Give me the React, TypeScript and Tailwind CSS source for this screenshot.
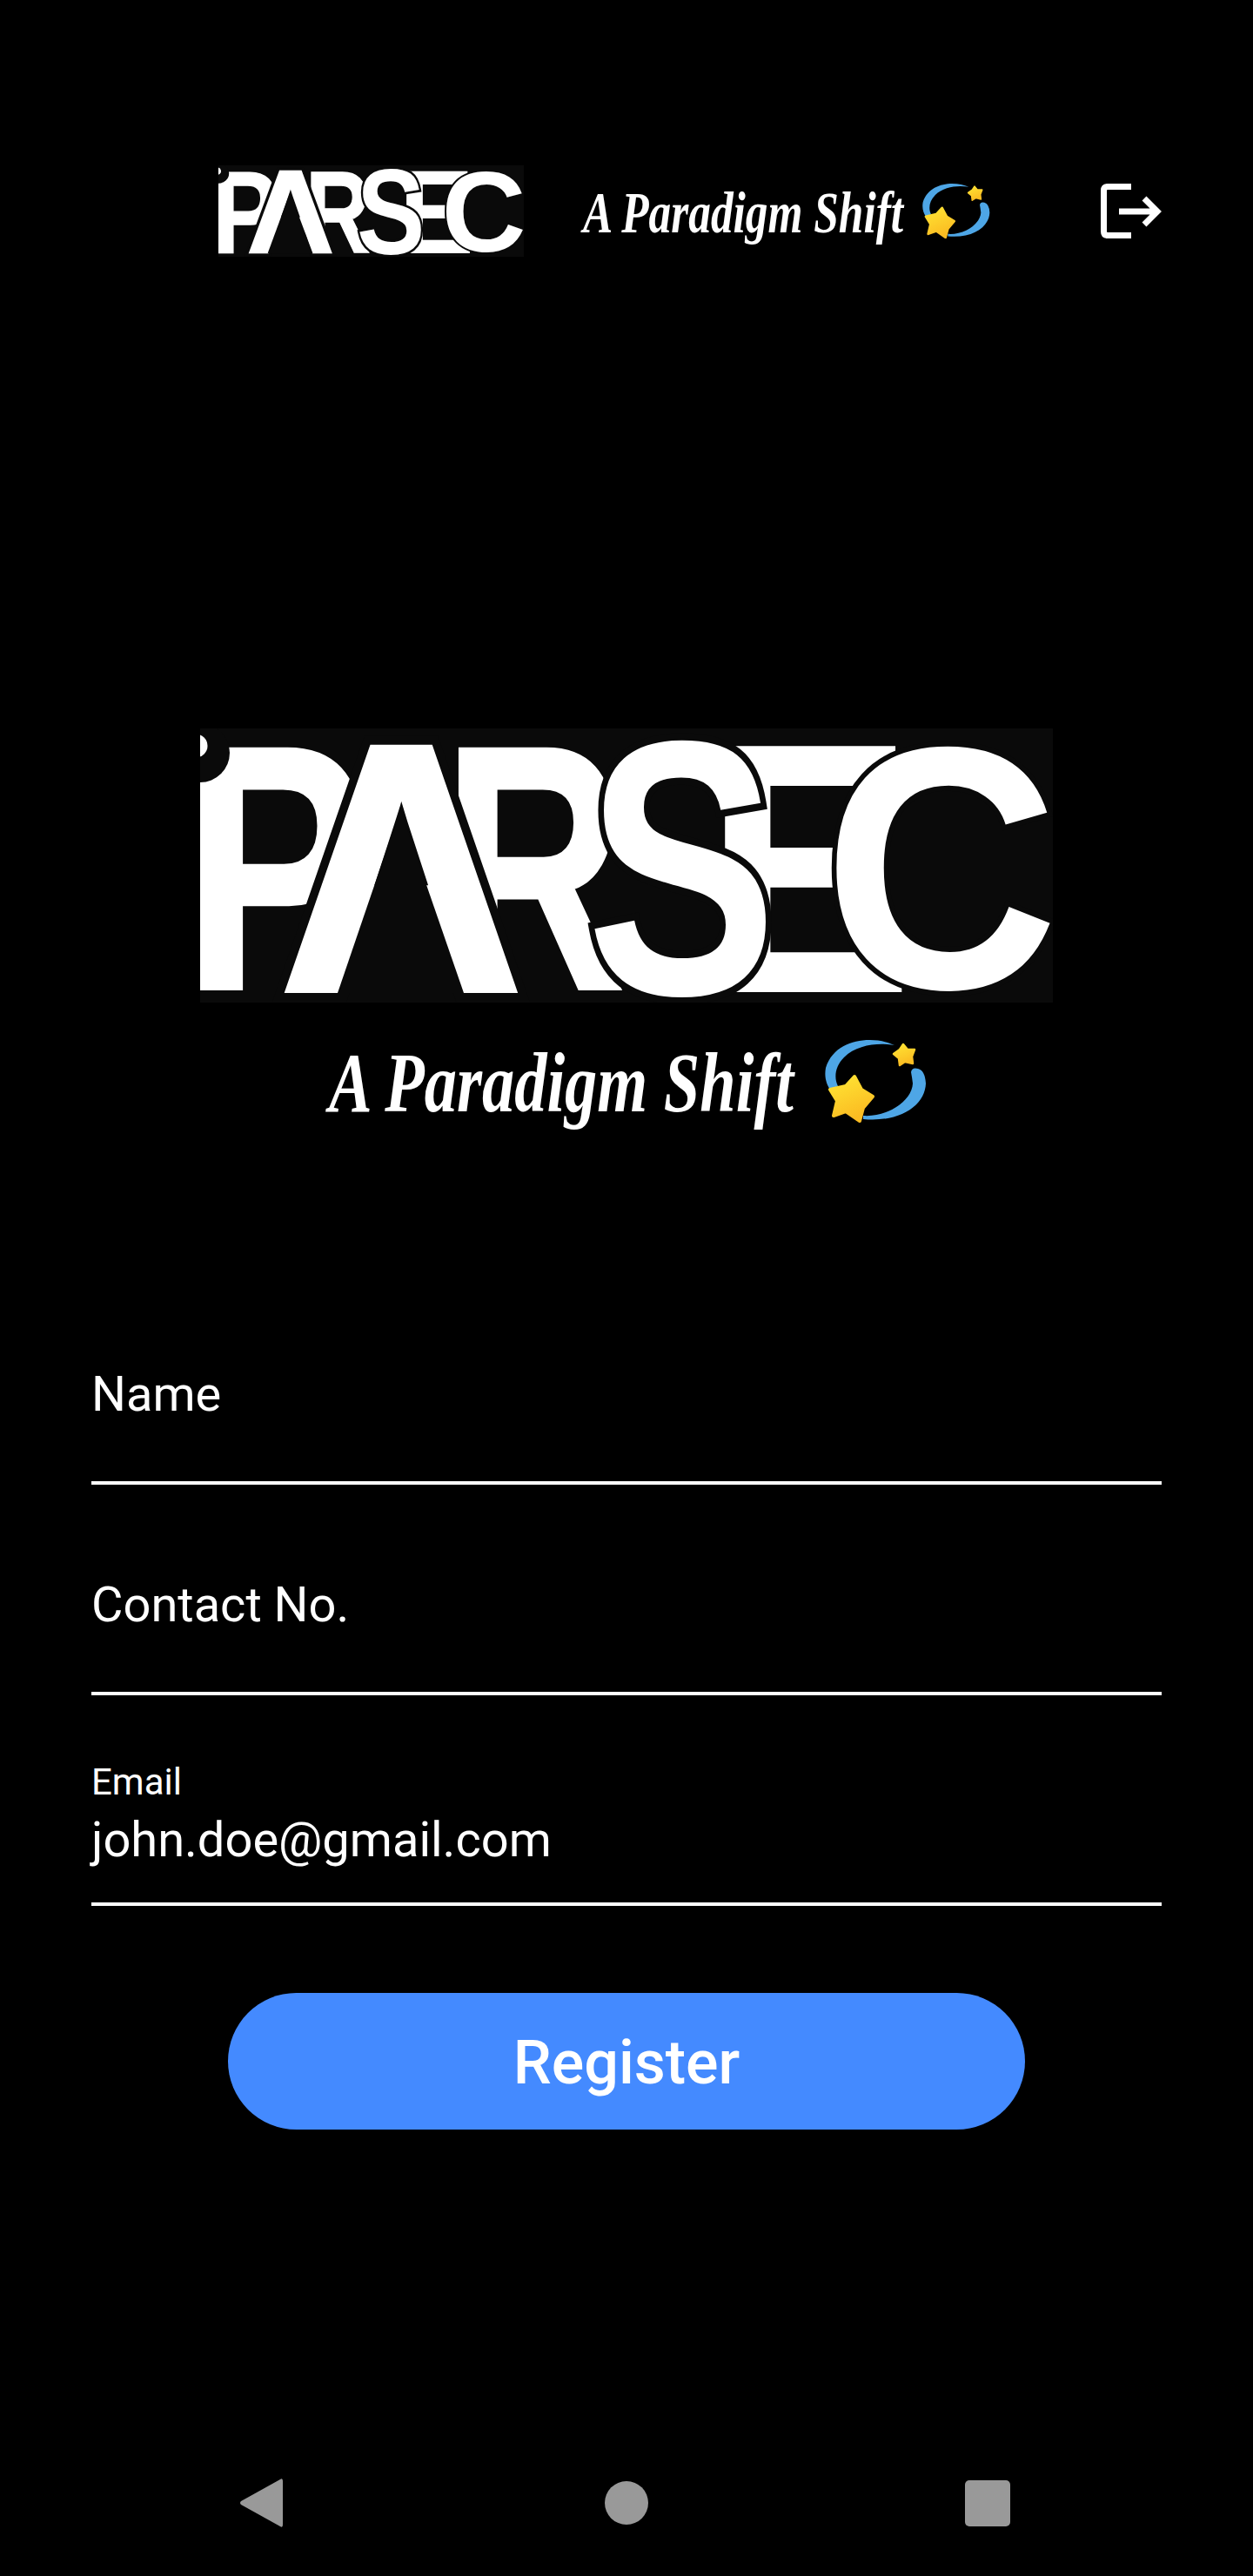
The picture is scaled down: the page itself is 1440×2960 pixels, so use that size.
const Letter = ({
  c,
  x,
  y,
  sx,
  sy,
  outline = 0,
  grow = 0,
}: {
  c: string;
  x: number;
  y: number;
  sx: number;
  sy: number;
  outline?: number;
  grow?: number;
}) => (
  <text
    transform={`translate(${x} ${y}) scale(${sx} ${sy})`}
    fontFamily="'Liberation Sans', sans-serif"
    fontWeight="700"
    fontSize="100"
    fill="#fff"
    stroke={outline ? "#0a0a0a" : grow ? "#fff" : "none"}
    strokeWidth={outline || grow}
    paintOrder="stroke"
  >
    {c}
  </text>
);

const ParsecLogo = ({ className }: { className: string }) => (
  <svg viewBox="0 0 980 315" preserveAspectRatio="none" className={className} role="img" aria-label="PARSEC">
    <rect width="980" height="315" fill="#0a0a0a" />
    <Letter c="P" x={-20} y={299} sx={3.2} sy={4.0} grow={1} />
    <circle cx="0" cy="28" r="34" fill="#0a0a0a" />
    <circle cx="-5" cy="20" r="13.5" fill="#fff" />
    <Letter c="R" x={279} y={299} sx={2.9} sy={4.0} grow={1} />
    <Letter c="A" x={94} y={299} sx={3.8} sy={4.0} outline={7.5} />
    <Letter c="A" x={94} y={299} sx={3.8} sy={4.0} grow={2.5} />
    <polygon points="230,93 158,304 303,304" fill="#0a0a0a" />
    <Letter c="E" x={579} y={303} sx={3.62} sy={4.11} />
    <Letter c="S" x={444} y={305} sx={3.28} sy={4.17} outline={4} />
    <Letter c="C" x={716} y={298} sx={3.75} sy={3.97} outline={3} />
  </svg>
);

const Swirl = ({ className, id }: { className: string; id: string }) => (
  <svg viewBox="18 14 117 97" className={className} aria-hidden="true">
    <defs>
      <linearGradient id={id} x1="0" y1="0" x2="0.4" y2="1">
        <stop offset="0" stopColor="#ffe635" />
        <stop offset="1" stopColor="#fbbc22" />
      </linearGradient>
    </defs>
    <path d="M98 21 C75 10 30 12 19 47 C17 58 20 66 24 72 L33 68 C28 58 30 45 40 35 C55 20 80 18 98 21 Z" fill="#4ea6e6" />
    <path d="M117 52 Q118 46 125 48 Q133 50 134 65 C133 90 105 110 62 106 L62 102 C90 104 118 85 119 65 Q118 57 117 52 Z" fill="#4ea6e6" />
    <path
      d="M108 20 L113 26 L121 26 L118 34 L119 42 L110 40 L104 44 L103 36 L97 31 L104 26 Z"
      fill={`url(#${id})`}
      stroke={`url(#${id})`}
      strokeWidth="2.5"
      strokeLinejoin="round"
    />
    <path
      d="M52 57 L60 72 L73 80 L62 93 L58 108 L42 97 L28 102 L32 85 L24 72 L42 68 Z"
      fill={`url(#${id})`}
      stroke={`url(#${id})`}
      strokeWidth="4"
      strokeLinejoin="round"
    />
  </svg>
);

const Field = ({ label, value }: { label: string; value?: string }) => (
  <div className="flex h-[242px] flex-col justify-end">
    {value ? (
      <div className="flex flex-col pb-[39px]">
        <span className="mb-2 text-[42px] leading-[50px] text-white">{label}</span>
        <span className="text-[56px] leading-[66px] text-white">{value}</span>
      </div>
    ) : (
      <span className="pb-[67px] text-[56px] leading-[66px] text-white">{label}</span>
    )}
    <div className="h-[4px] w-full bg-white" />
  </div>
);

export default function App() {
  return (
    <div className="flex h-[2960px] w-[1440px] flex-col bg-black font-[Roboto,sans-serif]">
      <header className="flex items-center pl-[251px] pr-[104px] pt-[190px]">
        <ParsecLogo className="h-[105px] w-[351px]" />
        <div className="ml-[68px] w-[370px] pt-[3px]">
          <span className="inline-block origin-left scale-x-[0.755] whitespace-nowrap font-['Liberation_Serif',serif] text-[68px] font-bold italic leading-[90px] text-white">
            A Paradigm Shift
          </span>
        </div>
        <Swirl id="swirl-small" className="ml-[20px] h-[65px] w-[78px]" />
        <svg viewBox="0 0 71 63" className="ml-auto h-[63px] w-[71px]" fill="none" stroke="#fff" strokeWidth="7" aria-label="Log out">
          <path d="M35 3.5 H8 Q3.5 3.5 3.5 8 V55 Q3.5 59.5 8 59.5 H35" />
          <path d="M21 32 H64 M50 17 L65 32 L50 47" />
        </svg>
      </header>

      <div className="mt-[542px] flex justify-center">
        <ParsecLogo className="h-[315px] w-[980px]" />
      </div>

      <div className="mt-[35px] flex h-[110px] items-center pl-[378px]">
        <div className="w-[538px] pt-[4px]">
          <span className="inline-block origin-left scale-x-[0.76] whitespace-nowrap font-['Liberation_Serif',serif] text-[98px] font-bold italic leading-[106px] text-white">
            A Paradigm Shift
          </span>
        </div>
        <Swirl id="swirl-large" className="ml-[32px] h-[97px] w-[117px]" />
      </div>

      <main className="mt-[167px] flex flex-col px-[105px]">
        <Field label="Name" />
        <Field label="Contact No." />
        <Field label="Email" value="john.doe@gmail.com" />
        <button className="mx-auto mt-[100px] h-[157px] w-[916px] rounded-full bg-[#448aff] pt-[3px] text-[70px] font-medium text-white">
          Register
        </button>
      </main>

      <nav className="mb-[56px] mt-auto flex h-[56px] items-center pl-[276px]">
        <svg viewBox="0 0 49 56" className="h-[56px] w-[49px]" fill="#999" aria-label="Back">
          <path d="M46 1 Q49 -1 49 3 V53 Q49 57 46 55 L1 30 Q-1 28 1 26 Z" />
        </svg>
        <div className="ml-[370px] h-[50px] w-[50px] rounded-full bg-[#999]" />
        <div className="ml-[364px] h-[53px] w-[52px] rounded-[5px] bg-[#999]" />
      </nav>
    </div>
  );
}
